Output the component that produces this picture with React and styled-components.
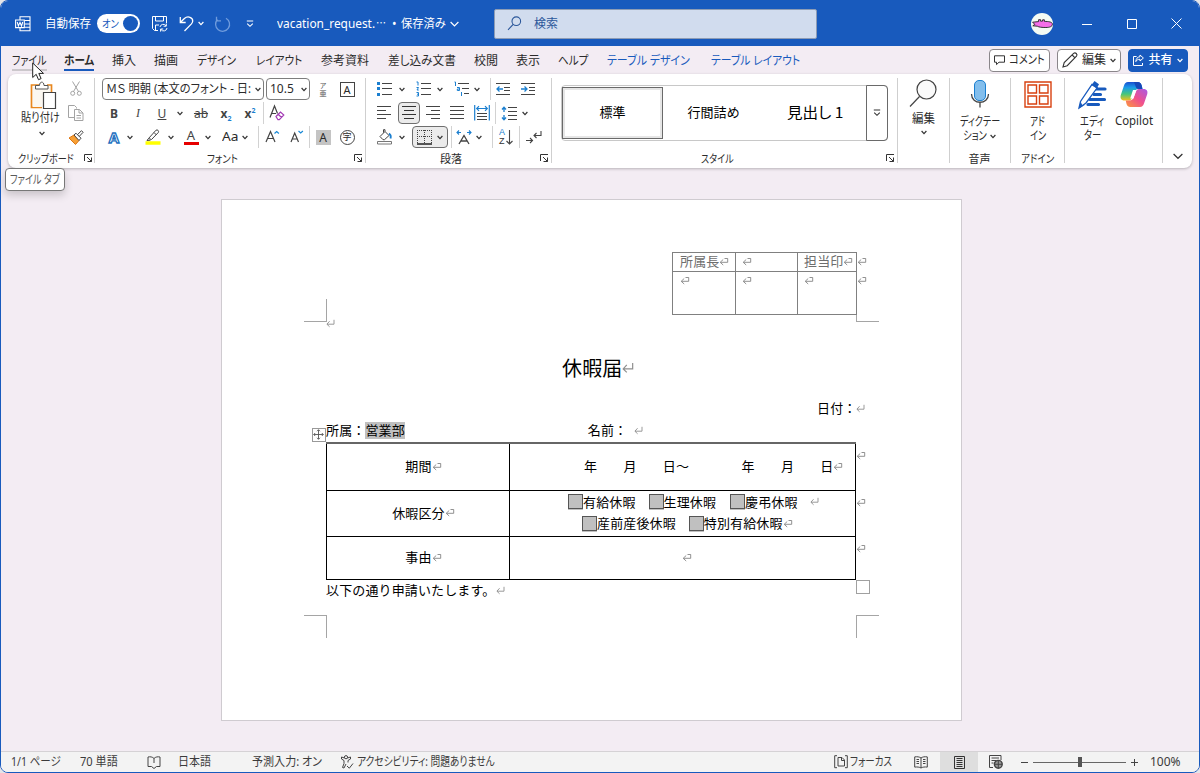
import React from "react";
import styled, { createGlobalStyle } from "styled-components";

const GlobalStyle = createGlobalStyle`
  * {
    box-sizing: border-box;
  }
  body {
    margin: 0;
    background: #e4e4e8;
    overflow: hidden;
    font-family: "Noto Sans", "Noto Sans CJK JP", sans-serif;
    font-size: 12px;
    color: #2b2b2b;
  }
`;

// Narrow UI lettering: squeezes or widens its text to the given width
const Fit = ({ w, children, ...rest }) => {
  const ref = React.useRef(null);
  const [scale, setScale] = React.useState(1);

  React.useLayoutEffect(() => {
    setScale(w / ref.current.offsetWidth);
  }, [w]);

  return (
    <FitBox $w={w} {...rest}>
      <FitText ref={ref} style={{ transform: `scaleX(${scale})` }}>
        {children}
      </FitText>
    </FitBox>
  );
};

const Svg = ({ w = 16, h = 16, children, ...rest }) => (
  <Drawing width={w} height={h} viewBox={`0 0 ${w} ${h}`} {...rest}>
    {children}
  </Drawing>
);

const Chevron = ({ w = 6, color }) => (
  <Svg w={w} h={5} stroke={color || "#333"} strokeWidth="1.2">
    <path d={`M.6 1l${w / 2 - 0.6} ${w * 0.43}L${w - 0.6} 1`} />
  </Svg>
);

const Launcher = () => (
  <Svg w={9} h={9} stroke="#333">
    <path d="M.5 7V.5H8M3 3l4.5 4.5M7.5 3.5v4h-4" />
  </Svg>
);

// paragraph end and cell end marks
const Ret = ({ s = 9 }) => (
  <Svg w={s} h={s} viewBox="0 0 9 9" stroke="#8f8f8f" strokeWidth=".9">
    <path d="M8 .8v4.4H1M3.6 2.2L.9 5.2l2.7 2.6" />
  </Svg>
);
const CellRet = () => (
  <Svg w={10} h={9} stroke="#858585" strokeWidth=".9">
    <path d="M5.5 1.5h3.2v3.800H1.500M4.200 2.500L1.200 5.300l3 2.700" />
  </Svg>
);

const Chev = ({ ml }) => (
  <Cell $w={8} $ml={ml}>
    <Chevron />
  </Cell>
);

const lines = (rows) => rows.map(([x, y, w]) => `M${x} ${y}h${w}`).join("");

const TitleBar = () => (
  <Title>
    <Cell $w={18} $ml={13}>
      <Svg w={16} h={16} stroke="#fff" strokeWidth="1.1">
        <path d="M5 4V.8h10v14H5v-3M9.5 4.5H15M9.5 8H15M9.5 11.3H15" />
        <path d="M.6 4h8.700v7.600H.6z" />
        <path d="M2.2 6l1.2 4L5 6.3 6.5 10 7.7 6" />
      </Svg>
    </Cell>
    <Gap $w={13} />
    <Fit w={46}>自動保存</Fit>
    <Toggle>
      <Fit w={17}>オン</Fit>
      <Knob />
    </Toggle>
    <Cell $w={18} $ml={11}>
      <Svg w={16} h={16} stroke="#fff">
        <path d="M6 14.5H2.5l-2-2v-12h14V7M3.5.5v4.5h8V.5M3.5 14V9H7M8 11a3.3 3.3 0 0 1 6-1.2M14.3 7.5v2.7h-2.7M15 12a3.3 3.3 0 0 1-6 1.5M8.6 15.6V13h2.6" />
      </Svg>
    </Cell>
    <Cell $w={16} $ml={9}>
      <Svg w={15} h={16} stroke="#fff" strokeWidth="1.3">
        <path d="M1.3 1v5.5h5.4M1.5 6.3L5.4 2.5c3.4-3 8.7-1.2 8.3 2.7-.1 1.2-.7 2-1.5 2.9L5.5 15" />
      </Svg>
    </Cell>
    <Cell $w={8} $ml={3}>
      <Chevron color="#fff" />
    </Cell>
    <Cell $w={18} $ml={8}>
      <Svg w={17} h={16} stroke="#6f9bdc" strokeWidth="1.3">
        <path d="M2.5.8v4H7M12 2.2a7 7 0 1 1-8.5 1.3" />
      </Svg>
    </Cell>
    <Cell $w={10} $ml={14}>
      <Svg w={8} h={8} stroke="#fff" strokeWidth="1.1">
        <path d="M.8 1h6.4M1.2 3.6L4 6.3l2.8-2.7" />
      </Svg>
    </Cell>
    <Gap $w={22} />
    <Fit w={98}>vacation_request.</Fit>
    <Gap $w={1} />
    <Fit w={10}>⋯</Fit>
    <Gap $w={6} />
    <Fit w={5}>•</Fit>
    <Gap $w={4} />
    <Fit w={45}>保存済み</Fit>
    <Cell $w={12} $ml={2}>
      <Chevron w={9} color="#fff" />
    </Cell>
    <Search>
      <Svg w={15} h={15} stroke="#2b579a" strokeWidth="1.1">
        <circle cx="9.3" cy="5.2" r="4.3" />
        <path d="M6.2 8.3L1 13.8" />
      </Svg>
      <Fit w={24}>検索</Fit>
    </Search>
    <Avatar>
      <Svg w={21} h={10} stroke="#222" strokeWidth=".9">
        <path
          fill="#f56ee8"
          d="M.6 3.2l6-.6V.7h2v1.5l2-.1V.8h1.8v1.6c4 0 8 .5 8 2.7 0 2.6-3 3.4-6.5 3.4-4 0-7-.3-8.6-1.3L.8 6.8l2-1.4z"
        />
      </Svg>
    </Avatar>
    <Cell $w={12} $ml={28}>
      <Svg w={10} h={10} stroke="#fff">
        <path d="M0 5.5h10" />
      </Svg>
    </Cell>
    <Cell $w={12} $ml={33}>
      <Svg w={10} h={10} stroke="#fff">
        <path d="M.5.5h9v9h-9z" />
      </Svg>
    </Cell>
    <Cell $w={12} $ml={32}>
      <Svg w={11} h={11} stroke="#fff">
        <path d="M.5.5l10 10M10.5.5l-10 10" />
      </Svg>
    </Cell>
  </Title>
);

const tabs = [
  ["ファイル", 35, 11, "hover"],
  ["ホーム", 30, 17, "active"],
  ["挿入", 24, 18],
  ["描画", 24, 18],
  ["デザイン", 39, 19],
  ["レイアウト", 46, 20],
  ["参考資料", 48, 19],
  ["差し込み文書", 68, 19],
  ["校閲", 24, 18],
  ["表示", 24, 18],
  ["ヘルプ", 30, 18],
  ["テーブル デザイン", 83, 19, "blue"],
  ["テーブル レイアウト", 89, 21, "blue"],
];

const TabBar = () => (
  <Tabs>
    {tabs.map(([name, w, ml, kind]) => (
      <Tab key={name} $ml={ml} $kind={kind}>
        <Fit w={w}>{name}</Fit>
      </Tab>
    ))}
    <TabButton $w={61} $ml={189}>
      <Svg w={11} h={11} stroke="#333">
        <path d="M.5.8h10v6.4H5L2.5 9.6V7.2h-2z" />
      </Svg>
      <Fit w={36}>コメント</Fit>
    </TabButton>
    <TabButton $w={64} $ml={7}>
      <Svg w={16} h={16} stroke="#333" strokeWidth="1.1">
        <path d="M1 15l1.2-4.4L11.6 1.4c1.8-1.6 4.4.9 2.9 2.8L5.2 13.7zM10.2 3l2.8 2.8" />
      </Svg>
      <Fit w={24}>編集</Fit>
      <Chevron />
    </TabButton>
    <TabButton $w={60} $ml={7} $primary>
      <Svg w={11} h={12} stroke="#fff">
        <path d="M3.6 2.5H.5v9h9V9M7 1l3.4 3L7 7V5.3C5 5.2 3.6 6 2.8 7.6 3 4.8 4.3 3 7 2.7z" />
      </Svg>
      <Fit w={24}>共有</Fit>
      <Chevron color="#fff" />
    </TabButton>
  </Tabs>
);

const ClipboardGroup = () => (
  <Group $w={86}>
    <Clip>
      <PasteButton>
        <PasteIcon w={27} h={29}>
          <path d="M9 4H1.5v22.5H12M17 4h4.5v7" stroke="#e8871e" strokeWidth="1.7" />
          <path d="M3 6h17v5h-7v15H3z" fill="#fbf7f0" />
          <path d="M5.5 8V4.5h4c0-4.5 4.5-4.5 4.5 0h4V8z" fill="#fff" stroke="#555" />
          <path d="M13.5 11.5h12v16h-12z" fill="#fff" stroke="#444" strokeWidth="1.2" />
        </PasteIcon>
        <Fit w={39}>貼り付け</Fit>
        <Chevron />
      </PasteButton>
      <ClipTools>
        <Svg w={12} h={15} stroke="#a3a3a3">
          <path d="M2.5.5l6 10M9.5.5l-6 10" />
          <circle cx="2.7" cy="12.3" r="2" />
          <circle cx="9.3" cy="12.3" r="2" />
        </Svg>
        <Svg w={16} h={16} stroke="#a3a3a3">
          <path d="M6 12.5H.5v-12h6l2 2v1M6.5 4.5h5L15 8v7.5H6.5zM11 4.5V8h4M8.5 10.5H13M8.5 13H13" />
        </Svg>
        <Svg w={16} h={15} stroke="#444">
          <path d="M1 8l5-3 5 5.5-3.5 4z" fill="#f7a035" stroke="#dd7612" />
          <path d="M6 5l2-1.8 5 5-2 2.300zM9.5 4.6l4-3.9 1.6 1.6-3.8 4" fill="#fff" />
        </Svg>
      </ClipTools>
    </Clip>
    <Label $ml={10}>
      <Fit w={56}>クリップボード</Fit>
      <Corner $ml={10}>
        <Launcher />
      </Corner>
    </Label>
  </Group>
);

const FontGroup = () => (
  <Group $w={270}>
    <Row $pl={7}>
      <Select $w={162}>
        <Fit w={145}>ＭＳ 明朝 (本文のフォント - 日:</Fit>
        <Chevron />
      </Select>
      <Select $w={44} $ml={2}>
        <Fit w={24}>10.5</Fit>
        <Chevron />
      </Select>
      <Cell $w={20} $ml={3}>
        <Ruby>
          <span>ア</span>
          <b>亜</b>
        </Ruby>
      </Cell>
      <Cell $w={20} $ml={4}>
        <CharBox>A</CharBox>
      </Cell>
    </Row>
    <Row $pl={7}>
      <Cell $w={20} $ml={2}>
        <Glyph $bold>B</Glyph>
      </Cell>
      <Cell $w={20} $ml={4}>
        <Glyph $serif>I</Glyph>
      </Cell>
      <Cell $w={20} $ml={4}>
        <Glyph $under>U</Glyph>
      </Cell>
      <Chev ml={4} />
      <Cell $w={20} $ml={7}>
        <Glyph $strike>ab</Glyph>
      </Cell>
      <Cell $w={20} $ml={5}>
        <Glyph $bold>
          x<sub>2</sub>
        </Glyph>
      </Cell>
      <Cell $w={20} $ml={4}>
        <Glyph $bold>
          x<sup>2</sup>
        </Glyph>
      </Cell>
      <Rule $ml={3} />
      <Cell $w={20} $ml={3}>
        <Svg w={16} h={16} stroke="#444" strokeWidth="1.2">
          <path d="M1 12.5L5.500 1l3 7.500M2.500 8.500H7" />
          <path d="M7 11.5L11.500 7l3.300 3-4.500 4.700H9zM9.200 9.300l3.300 3.200" stroke="#a33bb5" fill="#fff" />
        </Svg>
      </Cell>
    </Row>
    <Row $pl={7}>
      <Cell $w={20} $ml={2}>
        <OutlineA>A</OutlineA>
      </Cell>
      <Chev ml={2} />
      <Cell $w={20} $ml={9}>
        <Svg w={16} h={16} stroke="#444">
          <path d="M3.5 9.5L11 1.2c1.5-1 3.3.8 2.3 2.3l-6.800 7zM3.5 9.5l-1.500 2 3.500-.3M9 3.500l2.500 2.500" />
          <path d="M.5 14h15" stroke="#ffff00" strokeWidth="3.5" />
        </Svg>
      </Cell>
      <Chev ml={4} />
      <Cell $w={20} $ml={6}>
        <ColorA>A</ColorA>
      </Cell>
      <Chev ml={3} />
      <Cell $w={18} $ml={9}>
        <Fit w={16}>Aa</Fit>
      </Cell>
      <Chev ml={2} />
      <Rule $ml={9} />
      <Cell $w={20} $ml={3}>
        <Svg w={15} h={14} stroke="#444" strokeWidth="1.2">
          <path d="M1 12L5.5 1.5 10 12M2.5 8.5h6" />
          <path d="M9.5 3.5l2.2-2 2.2 2" stroke="#1b8ad6" />
        </Svg>
      </Cell>
      <Cell $w={20} $ml={5}>
        <Svg w={15} h={14} stroke="#444" strokeWidth="1.2">
          <path d="M1 12L4.7 3l3.800 9M2.300 9h5" />
          <path d="M8.5 1l2.2 2 2.2-2" stroke="#1b8ad6" />
        </Svg>
      </Cell>
      <Rule $ml={2} />
      <Cell $w={20} $ml={3}>
        <ShadeA>A</ShadeA>
      </Cell>
      <Cell $w={20} $ml={4}>
        <RoundChar>字</RoundChar>
      </Cell>
    </Row>
    <Label $ml={112}>
      <Fit w={31}>フォント</Fit>
      <Corner $ml={116}>
        <Launcher />
      </Corner>
    </Label>
  </Group>
);

const ParagraphGroup = () => (
  <Group $w={185}>
    <Row>
      <Cell $w={20} $ml={8}>
        <Svg w={15} h={15} stroke="#444">
          <path d={lines([[5, 1.5, 10], [5, 6.5, 10], [5, 12.5, 10]])} />
          <path d={lines([[0, 1.5, 3], [0, 6.5, 3], [0, 12.5, 3]])} stroke="#1b7fd0" strokeWidth="3" />
        </Svg>
      </Cell>
      <Chev ml={4} />
      <Cell $w={20} $ml={7}>
        <Svg w={15} h={16} stroke="#444">
          <path d={lines([[5, 2.5, 10], [5, 7.5, 10], [5, 13.5, 10]])} />
          <path d="M.5 1H2v3.5M.5 6.5h2L1 9h1.8M.5 11.5h2V15h-2M1 13.2h1.5" stroke="#1b7fd0" />
        </Svg>
      </Cell>
      <Chev ml={3} />
      <Cell $w={20} $ml={7}>
        <Svg w={15} h={16} stroke="#444">
          <path d={lines([[4, 2.5, 11], [8, 7.5, 7], [10, 12.5, 5]])} />
          <path d="M.5 1h1v4M3 6.5h2.5v3H3.3V8h2M7.5 11v4" stroke="#1b7fd0" />
        </Svg>
      </Cell>
      <Chev ml={2} />
      <Rule $ml={9} />
      <Cell $w={20} $ml={2}>
        <Svg w={14} h={14} stroke="#444">
          <path d={lines([[0, 1.5, 14], [8, 5.5, 6], [8, 8.5, 6], [0, 12.5, 14]])} />
          <path d="M7 7H1M3.5 4.5L1 7l2.5 2.5" stroke="#1b7fd0" strokeWidth="1.3" />
        </Svg>
      </Cell>
      <Cell $w={20} $ml={5}>
        <Svg w={14} h={14} stroke="#444">
          <path d={lines([[0, 1.5, 14], [8, 5.5, 6], [8, 8.5, 6], [0, 12.5, 14]])} />
          <path d="M0 7h6M3.5 4.5L6 7 3.5 9.5" stroke="#1b7fd0" strokeWidth="1.3" />
        </Svg>
      </Cell>
    </Row>
    <Row>
      <Cell $w={20} $ml={8}>
        <Svg w={14} h={14} stroke="#444">
          <path d={lines([[0, 0.5, 14], [0, 4.5, 9], [0, 8.5, 14], [0, 12.5, 9]])} />
        </Svg>
      </Cell>
      <Pressed $w={22} $ml={4}>
        <Svg w={14} h={14} stroke="#333">
          <path d={lines([[0, 0.5, 14], [2, 4.5, 10], [0, 8.5, 14], [2, 12.5, 10]])} />
        </Svg>
      </Pressed>
      <Cell $w={20} $ml={3}>
        <Svg w={14} h={14} stroke="#444">
          <path d={lines([[0, 0.5, 14], [5, 4.5, 9], [0, 8.5, 14], [5, 12.5, 9]])} />
        </Svg>
      </Cell>
      <Cell $w={20} $ml={4}>
        <Svg w={14} h={14} stroke="#444">
          <path d={lines([[0, 0.5, 14], [0, 4.5, 14], [0, 8.5, 14], [0, 12.5, 14]])} />
        </Svg>
      </Cell>
      <Cell $w={20} $ml={5}>
        <Svg w={16} h={16} stroke="#444">
          <path d={lines([[3, 8.5, 10], [3, 11.5, 10], [3, 14.5, 10]])} />
          <path
            d="M.7 0v15.5M15.3 0v15.5M3 3.5h10M5 1.2L2.7 3.5 5 5.8M11 1.2l2.3 2.3L11 5.8"
            stroke="#1b7fd0"
            strokeWidth="1.2"
          />
        </Svg>
      </Cell>
      <Rule $ml={3} />
      <Cell $w={20} $ml={3}>
        <Svg w={16} h={15} stroke="#444">
          <path d={lines([[7, 1.5, 9], [7, 5.5, 9], [7, 9.5, 9], [7, 13.5, 9]])} />
          <path
            d="M3 1.5V6M3 9v4.5M1 3.5l2-2.3 2 2.3M1 11.5l2 2.3 2-2.3"
            stroke="#1b7fd0"
            strokeWidth="1.3"
          />
        </Svg>
      </Cell>
      <Chev ml={2} />
    </Row>
    <Row>
      <Cell $w={20} $ml={9}>
        <Svg w={16} h={16} stroke="#444">
          <path d="M3 7.5l5-5 4 4-4.5 4.2H6zM8 2.5V.7H6.5v3" />
          <path d="M12 4.5c1.5 1 2.3 2.5 1.5 5" stroke="#1b7fd0" strokeWidth="1.8" />
          <path d="M.5 12.5h14V15H.5z" stroke="#777" fill="#fff" />
        </Svg>
      </Cell>
      <Chev ml={3} />
      <Pressed $w={36} $ml={6}>
        <Svg w={15} h={15} stroke="#444">
          <path d="M.5 0v13M7.5 0v13M14.5 0v13M0 .5h15M0 6.5h15" strokeDasharray="1 1" />
          <path d="M0 14h15" strokeWidth="1.6" stroke="#222" />
        </Svg>
        <Chevron />
      </Pressed>
      <Rule $ml={3} />
      <Cell $w={20} $ml={2}>
        <Svg w={16} h={15} stroke="#444" strokeWidth="1.3">
          <path d="M3 14l5-8.5 5 8.5M4.8 11h6.4" />
          <path d="M5 2.5H1M3 .5l-2 2 2 2M11 2.5h4M13 .5l2 2-2 2" stroke="#1b7fd0" strokeWidth="1.1" />
        </Svg>
      </Cell>
      <Chev ml={1} />
      <Rule $ml={9} />
      <Cell $w={20} $ml={3}>
        <SortLetters>
          <span>A</span>
          <span>Z</span>
        </SortLetters>
        <Svg w={8} h={15} stroke="#444" strokeWidth="1.1">
          <path d="M4.5 0v14M1.5 11l3 3 3-3" />
        </Svg>
      </Cell>
      <Rule $ml={3} />
      <Cell $w={20} $ml={4}>
        <Svg w={16} h={15} stroke="#444" strokeWidth="1.1">
          <path d="M15 1v4.5H8M10.5 3L8 5.5 10.5 8M0 10.5h6.5M4 8l2.5 2.5L4 13" />
        </Svg>
      </Cell>
    </Row>
    <Label $ml={74}>
      <Fit w={22}>段落</Fit>
      <Corner $ml={78}>
        <Launcher />
      </Corner>
    </Label>
  </Group>
);

const StyleGroup = () => (
  <Group $w={345}>
    <StyleArea>
      <Gallery>
        <StyleCard $selected>
          <Fit w={26}>標準</Fit>
        </StyleCard>
        <StyleCard>
          <Fit w={52}>行間詰め</Fit>
        </StyleCard>
        <StyleCard $big>
          <Fit w={56}>見出し 1</Fit>
        </StyleCard>
        <GalleryMore>
          <Svg w={8} h={8} stroke="#333" strokeWidth="1.1">
            <path d="M.8 1h6.4M1.2 3.6L4 6.3l2.8-2.7" />
          </Svg>
        </GalleryMore>
      </Gallery>
    </StyleArea>
    <Label $ml={149}>
      <Fit w={33}>スタイル</Fit>
      <Corner $ml={152}>
        <Launcher />
      </Corner>
    </Label>
  </Group>
);

const BigGroups = () => (
  <>
    <Group $w={51}>
      <BigTool>
        <Svg w={28} h={29} stroke="#444" strokeWidth="1.2">
          <circle cx="16.5" cy="10.5" r="9.5" fill="#fafafa" />
          <path d="M9.5 17.5L0 27.5" />
        </Svg>
        <Fit w={23}>編集</Fit>
        <Chevron />
      </BigTool>
    </Group>
    <Divider />
    <Group $w={59}>
      <BigTool>
        <Svg w={20} h={32}>
          <rect x="4.5" y="1.5" width="11" height="20" rx="4.500" fill="#83beec" stroke="#1b7fd0" />
          <path d="M1.5 15c0 11 17 11 17 0M10 23.5v5" stroke="#444" strokeWidth="1.3" />
        </Svg>
        <Fit w={40}>ディクテー</Fit>
        <Pair>
          <Fit w={24}>ション</Fit>
          <Chevron />
        </Pair>
      </BigTool>
      <Label $center>
        <Fit w={22}>音声</Fit>
      </Label>
    </Group>
    <Gap $w={1} />
    <Divider />
    <Group $w={53}>
      <BigTool>
        <Svg w={28} h={32} stroke="#d8400f" strokeWidth="1.4">
          <path d="M1 3h26v25H1z" />
          <path d="M4 6h8.500v8H4zM15.500 6H24v8h-8.500zM4 17h8.500v8H4zM15.500 17H24v8h-8.500z" />
        </Svg>
        <Fit w={15}>アド</Fit>
        <Fit w={16}>イン</Fit>
      </BigTool>
      <Label $center>
        <Fit w={33}>アドイン</Fit>
      </Label>
    </Group>
    <Divider />
    <Group $w={97}>
      <Pair $gap={0}>
        <BigTool $w={54}>
          <Svg w={30} h={32}>
            <path
              d="M18 10h10M17 15.5h6.5M13 20.5h14.5M11 25.5h10.5"
              stroke="#185abd"
              strokeWidth="3.2"
              strokeLinecap="round"
            />
            <path d="M2 29l1.5-6.5L15 5.500l5.200 3.300L9 24z" fill="#fff" stroke="#185abd" strokeWidth="1.3" />
            <path d="M2 29.5l1.5-7 2 4 3-1zM14.5 6l3-4L22 5.200l-2.300 4.300z" fill="#185abd" />
          </Svg>
          <Fit w={24}>エディ</Fit>
          <Fit w={17}>ター</Fit>
        </BigTool>
        <BigTool $w={29}>
          <Svg w={28} h={31}>
            <defs>
              <linearGradient id="cpTop" x1="0" y1="0" x2="0" y2="1">
                <stop offset="0" stopColor="#1a4fd0" />
                <stop offset=".3" stopColor="#1a9be8" />
                <stop offset=".65" stopColor="#45c77c" />
                <stop offset="1" stopColor="#f3c01c" />
              </linearGradient>
              <linearGradient id="cpBot" x1="1" y1="0" x2="0" y2="1">
                <stop offset="0" stopColor="#a85be6" />
                <stop offset=".5" stopColor="#f0508e" />
                <stop offset="1" stopColor="#fb9a3c" />
              </linearGradient>
            </defs>
            <path
              fill="url(#cpTop)"
              d="M8 3h9.500c2.500 0 3.500 1.200 4.200 3.500L22.500 10H19c-3 0-4.200 1.200-5 4l-2 5c-.7 2-2 2.500-4 2.500H4.500C1 21.500 0 19 .8 16L4 6.500C4.800 4.200 5.800 3 8 3z"
            />
            <path fill="#1647b8" d="M14 3h3.500c2.500 0 3.500 1.200 4.200 3.500L22.500 10H19c-2.500 0-3-1-3.500-3z" />
            <path
              fill="url(#cpBot)"
              d="M20 28h-9.500C8 28 7 26.800 6.400 24.500L5.700 21.500H9c3 0 4.200-1.300 5-4l2-5c.7-2.100 2-2.500 4-2.500h3.500c3.500 0 4.500 2.300 3.700 5.200L24 24.500c-.8 2.300-1.800 3.500-4 3.500z"
            />
            <path fill="#fff" d="M13 11h3.300l-2.800 8.500h-3.300z" />
          </Svg>
          <Fit w={38}>Copilot</Fit>
        </BigTool>
      </Pair>
    </Group>
    <Divider />
    <Collapse>
      <Chevron w={10} />
    </Collapse>
  </>
);

const RequestDocument = () => (
  <Page>
    <Mark $x={82} $y={99} $sides="right bottom" />
    <Mark $x={634} $y={115} $h={7} $sides="left bottom" />
    <Mark $x={82} $y={415} $sides="right top" />
    <Mark $x={634} $y={415} $sides="left top" />
    <StampRow>
      <StampTable>
        <StampCell $pl={7}>
          所属長
          <CellRet />
        </StampCell>
        <StampCell>
          <CellRet />
        </StampCell>
        <StampCell>
          担当印
          <CellRet />
        </StampCell>
        <StampCell $pl={7}>
          <CellRet />
        </StampCell>
        <StampCell>
          <CellRet />
        </StampCell>
        <StampCell>
          <CellRet />
        </StampCell>
      </StampTable>
      <RowEnds>
        <RowEnd $h={19}>
          <CellRet />
        </RowEnd>
        <RowEnd $h={19}>
          <CellRet />
        </RowEnd>
      </RowEnds>
    </StampRow>
    <Line $h={16} $pl={104}>
      <Ret />
    </Line>
    <Line $h={28} $pl={340} $mt={23} $size={20}>
      休暇届
      <Ret s={12} />
    </Line>
    <Line $h={22} $pl={595} $mt={15}>
      日付：
      <Ret />
    </Line>
    <Line $h={22} $pl={104}>
      所属：<Field>営業部</Field>
      <Gap $w={183} />
      名前：
      <Gap $w={7} />
      <Ret />
    </Line>
    <TableRow>
      <FormTable>
        <FormCell $label>
          期間
          <CellRet />
        </FormCell>
        <FormCell $pl={74}>
          {"年　　月　　日〜　　　　年　　月　　日"}
          <CellRet />
        </FormCell>
        <FormCell $label>
          休暇区分
          <CellRet />
        </FormCell>
        <FormCell $pl={58} $stack>
          <Checks>
            <Check />
            有給休暇
            <Gap $w={13} />
            <Check />
            生理休暇
            <Gap $w={14} />
            <Check />
            慶弔休暇
            <Gap $w={12} />
            <Ret />
          </Checks>
          <Checks $pl={14}>
            <Check />
            産前産後休暇
            <Gap $w={13} />
            <Check />
            特別有給休暇
            <CellRet />
          </Checks>
        </FormCell>
        <FormCell $label>
          事由
          <CellRet />
        </FormCell>
        <FormCell $pl={172}>
          <CellRet />
        </FormCell>
      </FormTable>
      <RowEnds>
        <RowEnd $h={47} $top>
          <CellRet />
        </RowEnd>
        <RowEnd $h={46} $top>
          <CellRet />
        </RowEnd>
        <RowEnd $h={43} $top>
          <CellRet />
        </RowEnd>
      </RowEnds>
      <MoveHandle>
        <Svg w={11} h={11} stroke="#555" strokeWidth=".9">
          <path d="M5.5.8v9.400M.8 5.500h9.400M4 2.200L5.500.7 7 2.200M4 8.800l1.500 1.500L7 8.800M2.200 4L.7 5.500 2.200 7M8.800 4l1.500 1.500L8.800 7" />
        </Svg>
      </MoveHandle>
      <ResizeHandle />
    </TableRow>
    <Line $h={20} $pl={104}>
      以下の通り申請いたします。
      <Gap $w={1} />
      <Ret />
    </Line>
  </Page>
);

const StatusBar = () => (
  <Status>
    <Gap $w={10} />
    <Fit w={50}>1/1 ページ</Fit>
    <Gap $w={19} />
    <Fit w={38}>70 単語</Fit>
    <Cell $w={16} $ml={28}>
      <Svg w={14} h={13} stroke="#444">
        <path d="M7 2.5C5.5.8 3 .5 1 1v9.5h3.500L7 12.500l2.500-2H13V1c-2-.5-4.500-.2-6 1.500zM7 2.500V7" />
      </Svg>
    </Cell>
    <Gap $w={16} />
    <Fit w={33}>日本語</Fit>
    <Gap $w={41} />
    <Fit w={70}>予測入力: オン</Fit>
    <Cell $w={16} $ml={17}>
      <Svg w={14} h={14} stroke="#444">
        <circle cx="6" cy="2.2" r="1.6" />
        <path d="M4.5 3l-3-1v2L4 5.500v3l-1.500 4L4 13l2-4M7.500 3l3-1v2L8 5.500v2M7 11l2.300 2.200L13 8.500" />
      </Svg>
    </Cell>
    <Gap $w={2} />
    <Fit w={138}>アクセシビリティ: 問題ありません</Fit>
    <Cell $w={14} $ml={339}>
      <Svg w={14} h={14} stroke="#444">
        <path d="M3 .7H.7v12H3M11 .7h2.300v12H11M4 2.500h4L10.500 5v6H4zM7.500 2.500v3h3" />
      </Svg>
    </Cell>
    <Gap $w={2} />
    <Fit w={42}>フォーカス</Fit>
    <Cell $w={16} $ml={21}>
      <Svg w={14} h={13} stroke="#444">
        <path d="M7 2v10M7 2C5.5.8 3 .5.7.9v10.200c2.300-.3 4.800-.1 6.300.9 1.500-1 4-1.200 6.300-.9V.9C11 .5 8.500.8 7 2zM2.500 3.500H5M2.500 5.500H5M2.500 7.500H5M9 3.500h2.500M9 5.500h2.500M9 7.500h2.500" />
      </Svg>
    </Cell>
    <ActiveView>
      <Svg w={11} h={13} stroke="#333">
        <path d="M.5.5h10v12H.5zM2.500 2.500h6M2.500 4.500h6M2.500 6.500h6M2.500 8.500h6M2.500 10.500h6" />
      </Svg>
    </ActiveView>
    <Cell $w={16} $ml={10}>
      <Svg w={14} h={14} stroke="#444">
        <path d="M4 12.5H.5V.5H12V5M2.500 3H10M2.500 5.500H7M2.500 8h2" />
        <circle cx="9.3" cy="9.3" r="3.9" fill="#999" strokeWidth="1.4" />
        <path d="M5.5 9.3h7.600M9.300 5.500v7.600" />
      </Svg>
    </Cell>
    <Cell $w={8} $ml={16}>
      <Svg w={7} h={7} stroke="#444">
        <path d="M0 3.5h7" />
      </Svg>
    </Cell>
    <Slider>
      <SliderTrack />
      <SliderThumb />
      <SliderTrack />
    </Slider>
    <Cell $w={8} $ml={4}>
      <Svg w={7} h={7} stroke="#444">
        <path d="M0 3.5h7M3.5 0v7" />
      </Svg>
    </Cell>
    <Gap $w={12} />
    <Fit w={31}>100%</Fit>
  </Status>
);

const App = () => {
  return (
    <Window>
      <GlobalStyle />
      <TitleBar />
      <TabBar />
      <Ribbon>
        <ClipboardGroup />
        <Divider />
        <FontGroup />
        <Divider />
        <ParagraphGroup />
        <Divider />
        <StyleGroup />
        <Divider />
        <BigGroups />
      </Ribbon>
      <Canvas>
        <RequestDocument />
      </Canvas>
      <StatusBar />
      <Tooltip>
        <Fit w={50}>ファイル タブ</Fit>
      </Tooltip>
      <Pointer>
        <Svg w={13} h={19} stroke="#222">
          <path fill="#fff" d="M.7 1v14.500l3.500-3.200 2.300 5.400 2.600-1.100-2.300-5.200h4.700z" />
        </Svg>
      </Pointer>
    </Window>
  );
};

export default App;

const FitBox = styled.span`
  display: block;
  flex: none;
  width: ${(p) => p.$w}px;
  white-space: nowrap;
`;
const FitText = styled.span`
  display: inline-block;
  transform-origin: 0 50%;
  white-space: pre;
  font-feature-settings: "palt";
`;
const Drawing = styled.svg`
  display: block;
  flex: none;
  fill: none;
  overflow: visible;
`;
const PasteIcon = styled(Svg)`
  margin-left: 5px;
`;

const Window = styled.div`
  position: relative;
  display: flex;
  flex-direction: column;
  width: 1200px;
  height: 773px;
  border: 1px solid #185abd;
  border-radius: 8px;
  overflow: hidden;
  background-color: #f3ecf3;
  line-height: 16px;
`;

const Title = styled.div`
  display: flex;
  align-items: center;
  height: 45px;
  background-color: #185abd;
  color: #fff;
`;
const Gap = styled.span`
  flex: none;
  width: ${(p) => p.$w}px;
`;
const Cell = styled.div`
  display: flex;
  flex: none;
  align-items: center;
  justify-content: center;
  width: ${(p) => p.$w}px;
  margin-left: ${(p) => p.$ml || 0}px;
`;
const Toggle = styled.div`
  display: flex;
  align-items: center;
  justify-content: space-between;
  width: 43px;
  height: 19px;
  margin-left: 6px;
  padding: 0 2px 0 5px;
  border-radius: 10px;
  background-color: #fff;
  color: #185abd;
  font-size: 11px;
`;
const Knob = styled.span`
  width: 15px;
  height: 15px;
  border-radius: 50%;
  background-color: #185abd;
`;
const Search = styled.div`
  display: flex;
  align-items: center;
  gap: 12px;
  width: 323px;
  height: 30px;
  margin-left: 34px;
  padding-left: 12px;
  border: 1px solid #8d9cb5;
  border-radius: 2px;
  background-color: #d1dcee;
  color: #2b579a;
`;
const Avatar = styled.div`
  display: flex;
  align-items: center;
  justify-content: center;
  width: 22px;
  height: 22px;
  margin-left: 214px;
  border-radius: 50%;
  background-color: #f4fbf4;
`;

const Tabs = styled.div`
  display: flex;
  align-items: center;
  height: 28px;
`;
const Tab = styled.div`
  display: flex;
  align-items: center;
  height: 22px;
  margin-left: ${(p) => p.$ml}px;
  padding-top: 4px;
  font-weight: ${(p) => (p.$kind === "active" ? 700 : 400)};
  color: ${(p) => (p.$kind === "blue" ? "#185abd" : "#2b2b2b")};
  border-bottom: 2px solid
    ${(p) =>
      p.$kind === "active" ? "#185abd" : p.$kind === "hover" ? "#cbc7cb" : "transparent"};
`;
const TabButton = styled.div`
  display: flex;
  align-items: center;
  justify-content: space-between;
  width: ${(p) => p.$w}px;
  height: 23px;
  margin-left: ${(p) => p.$ml}px;
  padding: 0 4px;
  border: 1px solid ${(p) => (p.$primary ? "#185abd" : "#8a868a")};
  border-radius: 4px;
  background-color: ${(p) => (p.$primary ? "#185abd" : "#fff")};
  color: ${(p) => (p.$primary ? "#fff" : "#2b2b2b")};
  font-weight: ${(p) => (p.$primary ? 500 : 400)};
`;

const Ribbon = styled.div`
  display: flex;
  flex: none;
  width: 1184px;
  height: 94px;
  margin-left: 7px;
  border-radius: 8px;
  background-color: #fff;
  box-shadow: 0 1px 3px rgba(0, 0, 0, 0.25);
`;
const Divider = styled.div`
  flex: none;
  width: 1px;
  margin: 4px 0 5px;
  background-color: #cfcfcf;
`;
const Group = styled.div`
  display: flex;
  flex: none;
  flex-direction: column;
  width: ${(p) => p.$w}px;
  padding-top: 3px;
`;
const Row = styled.div`
  display: flex;
  align-items: center;
  height: 24px;
  padding-left: ${(p) => p.$pl || 0}px;
`;
const Rule = styled.div`
  width: 1px;
  height: 22px;
  margin-left: ${(p) => p.$ml}px;
  background-color: #d2d2d2;
`;
const Label = styled.div`
  display: flex;
  align-items: center;
  justify-content: ${(p) => (p.$center ? "center" : "flex-start")};
  height: 19px;
  margin-top: auto;
  padding-left: ${(p) => p.$ml || 0}px;
  font-size: 11px;
`;
const Corner = styled.div`
  margin-left: ${(p) => p.$ml}px;
`;
const Clip = styled.div`
  display: flex;
  height: 72px;
`;
const PasteButton = styled.div`
  display: flex;
  flex-direction: column;
  align-items: center;
  width: 41px;
  margin-left: 12px;
  padding-top: 4px;

  > svg:last-child {
    margin: 5px 0 0 3px;
  }
`;
const ClipTools = styled.div`
  display: flex;
  flex-direction: column;
  align-items: center;
  justify-content: space-around;
  width: 20px;
  margin-left: 5px;
`;
const Select = styled.div`
  display: flex;
  align-items: center;
  justify-content: space-between;
  width: ${(p) => p.$w}px;
  height: 22px;
  margin-left: ${(p) => p.$ml || 0}px;
  padding: 0 2px 0 3px;
  border: 1px solid #7d7d7d;
  border-radius: 4px;
  background-color: #fff;
`;
const Ruby = styled.div`
  display: flex;
  flex-direction: column;
  align-items: center;
  font-family: "Noto Sans CJK JP", sans-serif;
  font-size: 7px;
  line-height: 8px;
  color: #555;

  b {
    color: #888;
  }
`;
const CharBox = styled.div`
  width: 15px;
  height: 15px;
  border: 1px solid #444;
  font-size: 11px;
  line-height: 13px;
  text-align: center;
`;
const Glyph = styled.span`
  font-size: 12px;
  line-height: 15px;
  color: #444;
  font-weight: ${(p) => (p.$bold ? 700 : 400)};
  font-family: ${(p) => (p.$serif ? '"Liberation Serif", serif' : "inherit")};
  font-style: ${(p) => (p.$serif ? "italic" : "normal")};
  text-decoration: ${(p) =>
    p.$under ? "underline" : p.$strike ? "line-through 1px" : "none"};

  sub,
  sup {
    font-size: 7px;
    line-height: 0;
    color: #1b7fd0;
  }
`;
const OutlineA = styled.span`
  font-size: 15px;
  font-weight: 700;
  color: #fff;
  -webkit-text-stroke: 1.3px #1b6fc0;
`;
const ColorA = styled.span`
  width: 15px;
  height: 16px;
  border-bottom: 3px solid #e60000;
  font-size: 13px;
  line-height: 12px;
  text-align: center;
  color: #444;
`;
const ShadeA = styled.span`
  width: 15px;
  height: 15px;
  background-color: #c4c4c4;
  line-height: 15px;
  text-align: center;
`;
const RoundChar = styled.span`
  width: 15px;
  height: 15px;
  border: 1px solid #444;
  border-radius: 50%;
  font-size: 9px;
  line-height: 12px;
  text-align: center;
`;
const Pressed = styled.div`
  display: flex;
  align-items: center;
  justify-content: space-evenly;
  width: ${(p) => p.$w}px;
  height: 22px;
  margin-left: ${(p) => p.$ml}px;
  border: 1px solid #6e6e6e;
  border-radius: 4px;
  background-color: #ebebeb;
`;
const SortLetters = styled.div`
  display: flex;
  flex-direction: column;
  font-family: "Liberation Sans", sans-serif;
  font-size: 9px;
  line-height: 9px;
  color: #333;

  span:first-child {
    color: #1b7fd0;
  }
`;

const StyleArea = styled.div`
  padding: 8px 0 0 9px;
`;
const Gallery = styled.div`
  display: flex;
  width: 327px;
  height: 56px;
  border: 1px solid #c8c8c8;
  border-radius: 4px;
`;
const StyleCard = styled.div`
  display: flex;
  align-items: center;
  justify-content: center;
  width: 101px;
  height: 52px;
  margin-top: 1px;
  padding-bottom: 2px;
  border: ${(p) => (p.$selected ? "1px solid #6a6a6a" : "0")};
  box-shadow: ${(p) => (p.$selected ? "inset 0 0 0 2px #e6e6e6" : "none")};
  font-family: "Noto Sans CJK JP", sans-serif;
  font-size: ${(p) => (p.$big ? 15 : 13)}px;
  color: #000;
`;
const GalleryMore = styled.div`
  display: flex;
  align-items: center;
  justify-content: center;
  width: 22px;
  height: 56px;
  margin: -1px -1px 0 auto;
  border: 1px solid #6a6a6a;
  border-radius: 0 4px 4px 0;
`;
const BigTool = styled.div`
  display: flex;
  flex: none;
  flex-direction: column;
  align-items: center;
  width: ${(p) => (p.$w ? `${p.$w}px` : "100%")};
  padding-top: 2px;
  font-size: 12px;
  line-height: 14px;

  > svg:first-child {
    margin-bottom: 4px;
  }
  > span + svg {
    margin-top: 4px;
  }
`;
const Pair = styled.div`
  display: flex;
  align-items: flex-start;
  gap: ${(p) => p.$gap ?? 3}px;

  > span + svg {
    margin-top: 5px;
  }
`;
const Collapse = styled.div`
  display: flex;
  align-items: flex-end;
  justify-content: center;
  width: 29px;
  padding-bottom: 10px;
`;

const Canvas = styled.div`
  flex: 1;
  padding: 31px 0 0 220px;
`;
const Page = styled.div`
  position: relative;
  width: 741px;
  height: 522px;
  padding-top: 52px;
  border: 1px solid #cfcbd0;
  background-color: #fff;
  color: #000;
  font-family: "Noto Sans CJK JP", sans-serif;
  font-size: 13px;
  letter-spacing: 0.13px;
`;
const Mark = styled.div`
  position: absolute;
  left: ${(p) => p.$x}px;
  top: ${(p) => p.$y}px;
  width: 23px;
  height: ${(p) => p.$h || 23}px;
  ${(p) =>
    p.$sides
      .split(" ")
      .map((s) => `border-${s}: 1px solid #a5a5a5;`)
      .join("")}
`;
const StampRow = styled.div`
  display: flex;
  padding-left: 450px;
`;
const StampTable = styled.div`
  display: grid;
  grid-template-columns: 62px 61px 58px;
  grid-template-rows: 18px 42px;
  gap: 1px;
  padding: 1px;
  background-color: #808080;
`;
const StampCell = styled.div`
  display: flex;
  align-items: flex-start;
  padding-left: ${(p) => p.$pl || 6}px;
  background-color: #fff;
  color: #6e6e6e;
  line-height: 16px;

  svg {
    margin-top: 4px;
  }
`;
const RowEnds = styled.div`
  display: flex;
  flex-direction: column;
`;
const RowEnd = styled.div`
  height: ${(p) => p.$h}px;
  padding-top: ${(p) => (p.$top ? 9 : 5)}px;
`;
const Line = styled.div`
  display: flex;
  align-items: center;
  height: ${(p) => p.$h}px;
  margin-top: ${(p) => p.$mt || 0}px;
  padding-left: ${(p) => p.$pl}px;
  font-size: ${(p) => p.$size || 13}px;
  white-space: pre;
`;
const Field = styled.span`
  height: 17px;
  line-height: 16px;
  background-color: #c0c0c0;
`;
const TableRow = styled.div`
  position: relative;
  display: flex;
  margin-top: 1px;
  padding-left: 104px;
`;
const FormTable = styled.div`
  display: grid;
  grid-template-columns: 182px 345px;
  grid-template-rows: 46px 45px 42px;
  gap: 1px;
  padding: 0 1px 1px;
  border-top: 2px solid #666;
  background-color: #000;
`;
const FormCell = styled.div`
  display: flex;
  flex-direction: ${(p) => (p.$stack ? "column" : "row")};
  align-items: ${(p) => (p.$stack ? "flex-start" : "center")};
  justify-content: ${(p) => (p.$label ? "center" : p.$stack ? "center" : "flex-start")};
  padding-left: ${(p) => p.$pl || 11}px;
  padding-bottom: 2px;
  background-color: #fff;
  white-space: pre;
`;
const Checks = styled.div`
  display: flex;
  align-items: center;
  height: 22px;
  padding-left: ${(p) => p.$pl || 0}px;
`;
const Check = styled.span`
  width: 15px;
  height: 15px;
  border: 1.5px solid #555;
  background-color: #c0c0c0;
  box-shadow: 0 1px 0 #c0c0c0;
`;
const MoveHandle = styled.div`
  position: absolute;
  left: 90px;
  top: -14px;
  width: 14px;
  height: 14px;
  border: 1px solid #999;
  background-color: #fff;
`;
const ResizeHandle = styled.div`
  position: absolute;
  left: 634px;
  top: 138px;
  width: 14px;
  height: 14px;
  border: 1px solid #a0a0a0;
  background-color: #fff;
`;

const Status = styled.div`
  display: flex;
  flex: none;
  align-items: center;
  height: 21px;
  border-top: 1px solid #d5d2d5;
  background-color: #f3f3f3;
  color: #3b3b3b;
`;
const ActiveView = styled.div`
  display: flex;
  align-items: center;
  justify-content: center;
  width: 38px;
  height: 20px;
  margin-left: 11px;
  background-color: #dedede;
`;
const Slider = styled.div`
  display: flex;
  align-items: center;
  width: 93px;
  margin-left: 5px;
`;
const SliderTrack = styled.div`
  flex: 1;
  height: 1px;
  background-color: #666;
`;
const SliderThumb = styled.div`
  width: 4px;
  height: 10px;
  background-color: #555;
`;

const Tooltip = styled.div`
  position: absolute;
  left: 4px;
  top: 167px;
  display: flex;
  align-items: center;
  justify-content: center;
  width: 60px;
  height: 23px;
  padding-top: 1px;
  border: 1px solid #777;
  border-radius: 4px;
  background-color: #fff;
  box-shadow: 0 4px 8px rgba(0, 0, 0, 0.18);
  color: #5a5a5a;
`;
const Pointer = styled.div`
  position: absolute;
  left: 31px;
  top: 61px;
`;
